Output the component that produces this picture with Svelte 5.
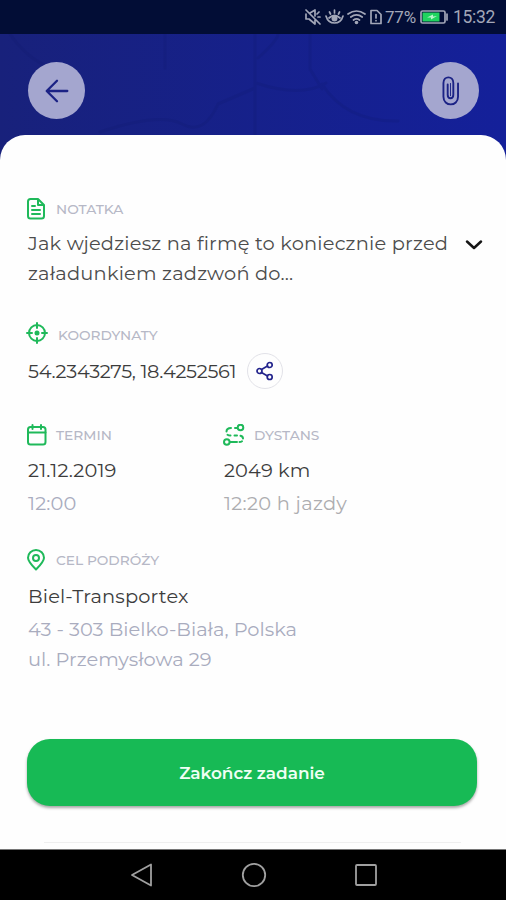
<script>
    let battery = 77;
    let time = '15:32';

    let noteLines = ['Jak wjedziesz na firmę to koniecznie przed', 'załadunkiem zadzwoń do...'];
    let expanded = false;

    let coordinates = '54.2343275, 18.4252561';

    function toggleNote() {
        expanded = !expanded;
    }
</script>

<div class="screen">
    <div class="status-bar">
        <svg class="mute" width="17" height="18" viewBox="0 0 17 18">
            <path d="M2 6v5h3l6 5v-5M6 5l5-3v6M2 2l14 14M13 6l2-2M14 9h2" />
        </svg>
        <svg class="eye" width="19" height="18" viewBox="0 0 19 18">
            <path d="M1 8q2 7 8.500 7T18 8M4 10q5.500-5 11 0M9.500 2v3M4.500 4l1 2M14.500 4l-1 2" />
            <circle class="solid" cx="9.500" cy="10.500" r="3" />
        </svg>
        <svg class="wifi" width="19" height="18" viewBox="0 0 19 18">
            <path d="M1 6q8.500-6 17 0M3.800 9q5.700-4.200 11.400 0M6.500 12q3-2.300 6 0" />
            <circle class="solid" cx="9.500" cy="14.500" r="1.800" />
        </svg>
        <svg class="sim" width="12" height="18" viewBox="0 0 12 18">
            <path d="M1 2.500h6l4 4v9H1zM6 6.500v3.500M6 12.500v.2" />
        </svg>
        <span class="percent">{battery}%</span>
        <svg class="battery" width="29" height="18" viewBox="0 0 29 18">
            <rect x="1" y="3" width="24" height="12" rx="1.500" />
            <rect class="charge" x="2.500" y="4.500" width="17" height="9" />
            <path class="bolt" d="M7 9.500l6-3v2l4-.5l-6 3.500v-2z" />
            <path d="M27 6v6" />
        </svg>
        <span class="time">{time}</span>
    </div>

    <header class="map-header">
        <svg class="roads" viewBox="0 0 506 124" preserveAspectRatio="none">
            <path d="M10 0q24 36 66 40M100 98q60-20 82-8t36-20l37-16M255 0v100M310 0v35l12 20M165 0v34M258 24q20-18 20-24M322 50q24 38 76 37M256 49q45 15 70 0" />
        </svg>
        <button class="round-button" aria-label="Wstecz">
            <svg width="28" height="28" viewBox="0 0 28 28">
                <path d="M26 14H3M14 2L2 14l12 12" />
            </svg>
        </button>
        <button class="round-button" aria-label="Załącznik">
            <svg class="clip" width="20" height="34" viewBox="0 0 20 34">
                <path d="M18 9v14c0 11-15.500 11-15.500 0V8.500c0-8 10.500-8 10.500 0V21c0 5-6 5-6 0V10" />
                <path d="M10 9v13" class="thin" />
            </svg>
        </button>
    </header>

    <main class="sheet">
        <section class="field note">
            <div class="field-head">
                <svg class="icon" width="20" height="22" viewBox="0 0 20 22">
                    <path d="M11 1H3.500Q1 1 1 3.500v14.500Q1 20.500 3.500 20.500h11Q17 20.500 17 18V7zM11 1v6h6M5 8h3M5 12h8M5 16h8" />
                </svg>
                <span class="label">NOTATKA</span>
            </div>
            <div class="note-row">
                <p class="note-text">
                    {#each noteLines as line}
                        <span class="note-line">{line}</span>
                    {/each}
                </p>
                <button class="expand" class:expanded on:click={toggleNote} aria-label="Rozwiń">
                    <svg width="18" height="12" viewBox="0 0 18 12">
                        <path d="M2 2.500l7 6.500l7-6.500" />
                    </svg>
                </button>
            </div>
        </section>

        <section class="field coords">
            <div class="field-head">
                <svg class="icon target" width="22" height="22" viewBox="0 0 22 22">
                    <circle cx="11" cy="11" r="8" />
                    <circle class="dot" cx="11" cy="11" r="2.500" />
                    <path d="M11 1v5M11 16v5M1 11h5M16 11h5" />
                </svg>
                <span class="label">KOORDYNATY</span>
            </div>
            <div class="coords-row">
                <span class="value coords-value">{coordinates}</span>
                <button class="share" aria-label="Udostępnij">
                    <svg width="18" height="20" viewBox="0 0 18 20">
                        <path d="M5.500 8.500l6-3.500M5.500 11.500l6 3.500" />
                        <circle cx="3.500" cy="10" r="2.500" />
                        <circle cx="13.700" cy="4" r="2.500" />
                        <circle cx="13.700" cy="16" r="2.500" />
                    </svg>
                </button>
            </div>
        </section>

        <div class="columns">
            <section class="field">
                <div class="field-head">
                    <svg class="icon" width="20" height="22" viewBox="0 0 20 22">
                        <rect x="1" y="3" width="17.500" height="17.500" rx="2.500" />
                        <path d="M1 8.500h17.500M5.500 1v4M14 1v4" />
                    </svg>
                    <span class="label">TERMIN</span>
                </div>
                <div class="value date">21.12.2019</div>
                <div class="value muted">12:00</div>
            </section>
            <section class="field">
                <div class="field-head">
                    <svg class="icon route" width="22" height="22" viewBox="0 0 22 22">
                        <circle cx="17.500" cy="3.500" r="2.800" />
                        <circle cx="3.800" cy="18" r="2.800" />
                        <path d="M14 4h-2M8 4Q3.500 4 3.500 7.500M4.500 10.800q1 .7 3 .7M11.500 11.500h2.500M17.500 11.800q2.500 .7 2.500 2.700M19 17.300q-1 .7-2.500 .7M14 18H7" />
                    </svg>
                    <span class="label">DYSTANS</span>
                </div>
                <div class="value distance">2049 km</div>
                <div class="value muted gray">12:20 h jazdy</div>
            </section>
        </div>

        <section class="field destination">
            <div class="field-head">
                <svg class="icon pin" width="20" height="22" viewBox="0 0 20 22">
                    <path d="M9 20.500C5 16.500 1 12.500 1 8.700a8 7.700 0 0 1 16 0C17 12.500 13 16.500 9 20.500z" />
                    <circle cx="9" cy="9" r="3" />
                </svg>
                <span class="label">CEL PODRÓŻY</span>
            </div>
            <div class="value company">Biel-Transportex</div>
            <div class="value muted city">43 - 303 Bielko-Biała, Polska</div>
            <div class="value muted street">ul. Przemysłowa 29</div>
        </section>

        <button class="finish">Zakończ zadanie</button>
        <div class="divider"></div>
    </main>

    <nav class="nav-bar">
        <svg width="24" height="26" viewBox="0 0 24 26">
            <path d="M21 2.500v21L2 13z" />
        </svg>
        <svg width="26" height="26" viewBox="0 0 26 26">
            <circle cx="13" cy="13" r="11.200" />
        </svg>
        <svg width="24" height="26" viewBox="0 0 24 26">
            <rect x="2" y="3" width="20" height="20" rx="1" />
        </svg>
    </nav>
</div>

<style>
    :global(body) {
        margin: 0;
        background: #000;
    }
    .screen {
        display: flex;
        flex-direction: column;
        width: 506px;
        height: 900px;
        overflow: hidden;
        background: linear-gradient(90deg, #18217b, #14209a);
        font-family: Montserrat, Inter, 'Open Sans', sans-serif;
    }
    button {
        padding: 0;
        border: none;
        background: none;
        font-family: inherit;
        cursor: pointer;
    }
    svg {
        display: block;
        flex-shrink: 0;
        fill: none;
        stroke-linecap: round;
        stroke-linejoin: round;
    }
    .status-bar {
        display: flex;
        align-items: center;
        box-sizing: border-box;
        height: 34px;
        padding: 0 10px 0 304px;
        background: #020d36;
        color: #a3a7b8;
        font-family: Roboto, sans-serif;
        font-size: 17.5px;
        white-space: nowrap;
    }
    .status-bar svg {
        stroke: #a3a7b8;
        stroke-width: 1.7;
    }
    .status-bar .solid {
        fill: #a3a7b8;
        stroke: none;
    }
    .eye {
        margin-left: 4px;
    }
    .wifi {
        margin-left: 3px;
    }
    .sim {
        margin-left: 4px;
    }
    .percent {
        width: 32px;
        margin-left: 3px;
        font-size: 17px;
        letter-spacing: -0.2px;
    }
    .battery {
        margin-left: 3px;
    }
    .status-bar .charge {
        fill: #1fd45f;
        stroke: none;
    }
    .status-bar .bolt {
        fill: #b9f5cb;
        stroke: none;
    }
    .time {
        margin-left: 4px;
        letter-spacing: -0.3px;
    }
    .map-header {
        position: relative;
        display: flex;
        justify-content: space-between;
        box-sizing: border-box;
        height: 101px;
        padding: 28px 27px 0 28px;
    }
    .roads {
        position: absolute;
        inset: 0;
        width: 506px;
        height: 124px;
        stroke: #10186d;
        stroke-width: 3;
        opacity: 0.2;
    }
    .round-button {
        position: relative;
        display: flex;
        align-items: center;
        justify-content: center;
        width: 57px;
        height: 57px;
        border-radius: 50%;
        background: #a4a6cf;
    }
    .round-button svg {
        width: 24px;
        height: 24px;
        stroke: #1b2285;
        stroke-width: 2.7;
    }
    .round-button .clip {
        width: 19px;
        height: 32px;
        stroke-width: 2;
    }
    .round-button .thin {
        stroke-width: 1;
    }
    .sheet {
        position: relative;
        box-sizing: border-box;
        height: 715px;
        padding: 63px 29px 0 28px;
        border-bottom: 1px solid #777;
        border-radius: 25px 25px 0 0;
        background: #fefefe;
    }
    .field-head {
        display: flex;
        align-items: center;
        height: 22px;
    }
    .icon {
        margin-left: -1px;
        margin-right: 9px;
        stroke: #1fb95a;
        stroke-width: 2;
    }
    .target {
        margin-left: -2px;
        margin-right: 10px;
        transform: translateY(-2px);
    }
    .target .dot {
        fill: #1fb95a;
        stroke: none;
    }
    .label {
        color: #b6b8c6;
        font-size: 13.75px;
        font-weight: 500;
        white-space: nowrap;
    }
    .note-row {
        display: flex;
        justify-content: space-between;
        margin-top: 9px;
    }
    .note-text {
        margin: 0;
        color: #4c4c4c;
        font-size: 19.4px;
        letter-spacing: 0.2px;
        line-height: 29.5px;
    }
    .note-line {
        display: block;
        white-space: nowrap;
    }
    .expand {
        display: flex;
        align-items: center;
        width: 18px;
        height: 31px;
        margin-right: -6px;
    }
    .expand.expanded {
        transform: rotate(180deg);
    }
    .expand svg {
        stroke: #151515;
        stroke-width: 2.5;
    }
    .coords {
        margin-top: 36px;
    }
    .coords-row {
        display: flex;
        align-items: center;
        margin-top: 7px;
    }
    .value {
        color: #3c3c3c;
        font-size: 19.4px;
        letter-spacing: 0.15px;
        line-height: 33px;
        white-space: nowrap;
    }
    .muted {
        color: #a9acbe;
    }
    .gray {
        color: #adadb0;
        letter-spacing: 0.3px;
    }
    .coords-value {
        width: 219px;
        letter-spacing: -0.3px;
    }
    .share {
        display: flex;
        align-items: center;
        justify-content: center;
        box-sizing: border-box;
        width: 36px;
        height: 36px;
        border: 1.5px solid #e2e2e8;
        border-radius: 50%;
    }
    .share svg {
        stroke: #23248c;
        stroke-width: 1.7;
    }
    .columns {
        display: grid;
        grid-template-columns: 196px 1fr;
        margin-top: 35px;
    }
    .columns .date,
    .columns .distance {
        margin-top: 8px;
    }
    .destination {
        margin-top: 29px;
    }
    .company {
        margin-top: 9px;
    }
    .city {
        letter-spacing: 0;
    }
    .street {
        line-height: 27px;
        letter-spacing: 0;
    }
    .finish {
        display: block;
        width: 450px;
        height: 67px;
        margin-top: 66px;
        margin-left: -1px;
        border-radius: 23px;
        background: #17ba55;
        box-shadow: 0 2px 3px rgba(0, 0, 0, 0.35);
        color: #effff4;
        font-size: 16.9px;
        font-weight: 600;
    }
    .divider {
        height: 1px;
        margin: 36px 16px 0;
        background: #efefef;
    }
    .nav-bar {
        display: flex;
        align-items: center;
        justify-content: space-between;
        box-sizing: border-box;
        height: 50px;
        padding: 0 128px 0 130px;
        background: #000;
    }
    .nav-bar svg {
        stroke: #a0a0a0;
        stroke-width: 1.8;
    }
</style>
